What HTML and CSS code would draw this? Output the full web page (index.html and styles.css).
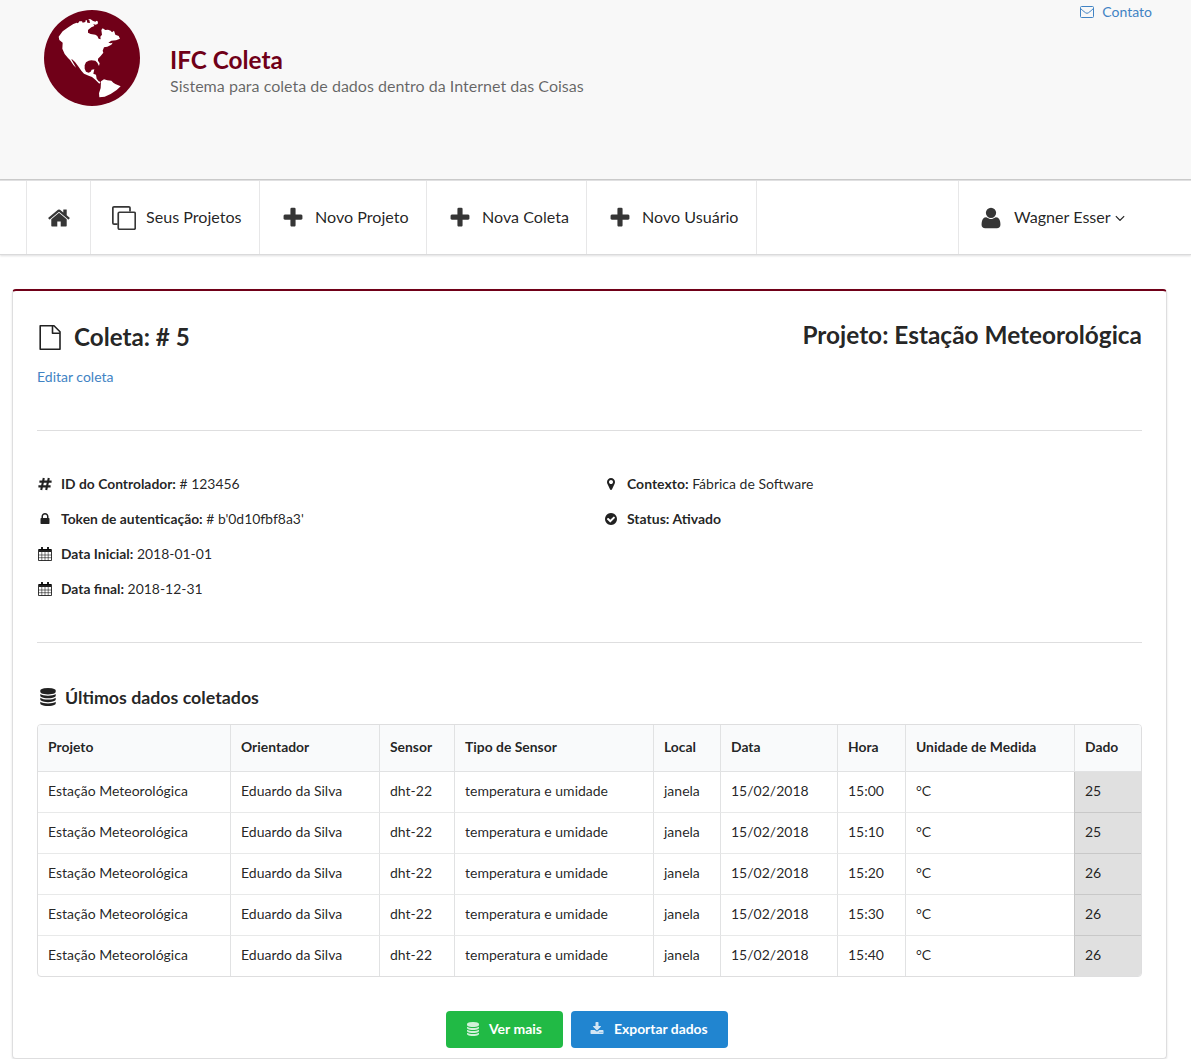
FILE: index.html
```html
<!DOCTYPE html>
<html lang="pt-BR">
<head>
<meta charset="utf-8">
<title>IFC Coleta</title>
<link rel="stylesheet" href="styles.css">
</head>
<body>
<svg class="sprite" aria-hidden="true">
  <symbol id="home" viewBox="0 0 1792 1792"><path d="M1472 992v480q0 26-19 45t-45 19h-384v-384h-256v384h-384q-26 0-45-19t-19-45v-480q0-1 .5-3t.5-3l575-474 575 474q1 2 1 6zm223-69l-62 74q-8 9-21 11h-3q-13 0-21-7l-692-577-692 577q-12 8-24 7-13-2-21-11l-62-74q-8-10-7-23.5t11-21.5l719-599q32-26 76-26t76 26l244 204v-195q0-14 9-23t23-9h192q14 0 23 9t9 23v408l219 182q10 8 11 21.5t-7 23.5z"/></symbol>
  <symbol id="clone" viewBox="0 0 24 24"><g fill="none" stroke="currentColor" stroke-width="1.7"><rect x="6.25" y="6.25" width="17" height="17" rx="1.2"/><path d="M18 5.5V2Q18 .85 16.8.85H2Q.85.85.85 2v15q0 1.2 1.2 1.2H5.5"/></g></symbol>
  <symbol id="plus" viewBox="0 0 1792 1792"><path d="M1600 736v192q0 40-28 68t-68 28h-416v416q0 40-28 68t-68 28h-192q-40 0-68-28t-28-68v-416h-416q-40 0-68-28t-28-68v-192q0-40 28-68t68-28h416v-416q0-40 28-68t68-28h192q40 0 68 28t28 68v416h416q40 0 68 28t28 68z"/></symbol>
  <symbol id="user" viewBox="0 0 1792 1792"><path d="M1600 1405q0 120-73 189.5t-194 69.5h-874q-121 0-194-69.5t-73-189.5q0-53 3.5-103.5t14-109 26.5-108.5 43-97.5 62-81 85.5-53.5 111.5-20q9 0 42 21.5t74.5 48 108 48 133.5 21.5 133.5-21.5 108-48 74.5-48 42-21.5q61 0 111.5 20t85.5 53.5 62 81 43 97.5 26.5 108.5 14 109 3.5 103.5zm-320-893q0 159-112.5 271.5t-271.5 112.5-271.5-112.5-112.5-271.5 112.5-271.5 271.5-112.5 271.5 112.5 112.5 271.5z"/></symbol>
  <symbol id="angle" viewBox="0 0 1792 1792"><path d="M1395 736q0 13-10 23l-466 466q-10 10-23 10t-23-10l-466-466q-10-10-10-23t10-23l50-50q10-10 23-10t23 10l393 393 393-393q10-10 23-10t23 10l50 50q10 10 10 23z"/></symbol>
  <symbol id="database" viewBox="0 0 1792 1792"><path d="M896 768q237 0 443-43t325-127v170q0 69-103 128t-280 93.5-385 34.5-385-34.5-280-93.5-103-128v-170q119 84 325 127t443 43zm0 768q237 0 443-43t325-127v170q0 69-103 128t-280 93.5-385 34.5-385-34.5-280-93.5-103-128v-170q119 84 325 127t443 43zm0-384q237 0 443-43t325-127v170q0 69-103 128t-280 93.5-385 34.5-385-34.5-280-93.5-103-128v-170q119 84 325 127t443 43zm0-1152q208 0 385 34.5t280 93.5 103 128v128q0 69-103 128t-280 93.5-385 34.5-385-34.5-280-93.5-103-128v-128q0-69 103-128t280-93.5 385-34.5z"/></symbol>
  <symbol id="lock" viewBox="0 0 1792 1792"><path d="M640 768h512v-192q0-106-75-181t-181-75-181 75-75 181v192zm832 96v576q0 40-28 68t-68 28h-960q-40 0-68-28t-28-68v-576q0-40 28-68t68-28h32v-192q0-184 132-316t316-132 316 132 132 316v192h32q40 0 68 28t28 68z"/></symbol>
  <symbol id="download" viewBox="0 0 1792 1792"><path d="M1344 1344q0-26-19-45t-45-19-45 19-19 45 19 45 45 19 45-19 19-45zm256 0q0-26-19-45t-45-19-45 19-19 45 19 45 45 19 45-19 19-45zm128-224v320q0 40-28 68t-68 28h-1472q-40 0-68-28t-28-68v-320q0-40 28-68t68-28h465l135 136q58 56 136 56t136-56l136-136h464q40 0 68 28t28 68zm-325-569q17 41-14 70l-448 448q-18 19-45 19t-45-19l-448-448q-31-29-14-70 17-39 59-39h256v-448q0-26 19-45t45-19h256q26 0 45 19t19 45v448h256q42 0 59 39z"/></symbol>
  <symbol id="marker" viewBox="0 0 1792 1792"><path d="M1152 640q0-106-75-181t-181-75-181 75-75 181 75 181 181 75 181-75 75-181zm256 0q0 109-33 179l-364 774q-16 33-47.5 52t-67.5 19-67.5-19-46.5-52l-365-774q-33-70-33-179 0-212 150-362t362-150 362 150 150 362z"/></symbol>
  <symbol id="check" viewBox="0 0 1792 1792"><path d="M1412 734q0-28-18-46l-91-90q-19-19-45-19t-45 19l-408 407-226-226q-19-19-45-19t-45 19l-91 90q-18 18-18 46 0 27 18 45l362 362q19 19 45 19 27 0 46-19l543-543q18-18 18-45zm252 162q0 209-103 385.5t-279.5 279.5-385.5 103-385.5-103-279.5-279.5-103-385.5 103-385.5 279.5-279.5 385.5-103 385.5 103 279.5 279.5 103 385.5z"/></symbol>
  <symbol id="hash" viewBox="0 0 14 14"><path d="M5.8 1L3.2 13M10.8 1L8.2 13M1.4 4.6H13.6M.4 9.4H12.6" fill="none" stroke="currentColor" stroke-width="2.1"/></symbol>
  <symbol id="calendar" viewBox="0 0 14 14"><path d="M1 2H13V5H1ZM3 0H5V4H3ZM9 0H11V4H9Z"/><path d="M.5 2.5H13.5V13.5H.5Z" fill="none" stroke="currentColor" stroke-width=".9"/><path d="M.5 8H13.5M.5 10.7H13.5M3.8 5V13.5M7 5V13.5M10.2 5V13.5" fill="none" stroke="currentColor" stroke-width=".6"/></symbol>
  <symbol id="envelope" viewBox="0 0 14 14"><path d="M.5 2.5Q.5 1.5 1.5 1.5H12.5Q13.5 1.5 13.5 2.5V11.5Q13.5 12.5 12.5 12.5H1.5Q.5 12.5 .5 11.5ZM.8 3.7Q2.5 5.5 5.6 7.8Q7 8.8 8.4 7.8Q11.5 5.5 13.2 3.7" fill="none" stroke="currentColor"/></symbol>
  <symbol id="file" viewBox="0 0 24 26"><path d="M2.2 .8H16L22 6.8V24.2H2.2ZM14.5 1V8.2H22" fill="none" stroke="currentColor" stroke-width="1.6" stroke-linejoin="round"/></symbol>
</svg>

<header class="masthead">
  <svg class="globe" viewBox="6 6 288 288"><circle cx="150" cy="150" r="144" fill="#700018"/><path fill="#fff" d="M50 86L62 70 80 57 94 48 104 44 108 46 112 40 120 40 122 44 130 42 131 37 134 36 136 44 144 45 142 36 138 33 146 34 152 38 160 41 164 38 168 41 167 48 160 50 154 48 157 54 148 58 138 66 138 74 146 78 160 80 166 84 170 92 176 94 175 86 180 80 178 66 182 61 190 66 198 65 206 68 210 73 216 68 220 80 230 84 234 92 222 97 208 98 199 104 206 106 212 104 208 110 196 116 186 118 182 128 184 134 176 144 168 152 168 158 173 166 171 174 166 164 160 158 148 157 140 158 132 163 128 172 128 182 132 191 140 194 146 191 149 185 157 184 154 197 162 200 164 212 170 220 176 222 172 227 160 215 150 207 140 203 126 197 118 188 108 174 99 162 90 154 88 154 96 168 102 179 94 171 84 156 78 150 68 138 61 122 62 104 52 96Z"/><path fill="#fff" d="M177 220L186 214 196 217 208 218 214 224 220 228 236 235 224 246 206 258 188 266 172 268 171 256 176 240Z"/></svg>
  <div class="brand">
    <h1>IFC Coleta</h1>
    <p>Sistema para coleta de dados dentro da Internet das Coisas</p>
  </div>
  <a class="contact"><svg class="icon"><use href="#envelope"/></svg>Contato</a>
</header>

<nav class="menu">
  <a class="item home"><svg class="big"><use href="#home"/></svg></a>
  <a class="item"><svg class="big clone"><use href="#clone"/></svg><span>Seus Projetos</span></a>
  <a class="item"><svg class="big"><use href="#plus"/></svg><span>Novo Projeto</span></a>
  <a class="item"><svg class="big"><use href="#plus"/></svg><span>Nova Coleta</span></a>
  <a class="item"><svg class="big"><use href="#plus"/></svg><span>Novo Usuário</span></a>
  <div class="item"></div>
  <a class="item account"><svg class="big"><use href="#user"/></svg><span>Wagner Esser</span><svg class="caret"><use href="#angle"/></svg></a>
</nav>

<main class="segment">
  <div class="heading">
    <h2><svg class="file"><use href="#file"/></svg>Coleta: # 5</h2>
    <h2 class="project">Projeto: Estação Meteorológica</h2>
  </div>
  <a class="edit">Editar coleta</a>
  <section class="details">
    <ul>
      <li><svg class="icon"><use href="#hash"/></svg><span><b>ID do Controlador:</b> # 123456</span></li>
      <li><svg class="icon"><use href="#lock"/></svg><span><b>Token de autenticação:</b> # b'0d10fbf8a3'</span></li>
      <li><svg class="icon"><use href="#calendar"/></svg><span><b>Data Inicial:</b> 2018-01-01</span></li>
      <li><svg class="icon"><use href="#calendar"/></svg><span><b>Data final:</b> 2018-12-31</span></li>
    </ul>
    <ul>
      <li><svg class="icon"><use href="#marker"/></svg><span><b>Contexto:</b> Fábrica de Software</span></li>
      <li><svg class="icon"><use href="#check"/></svg><span><b>Status: Ativado</b></span></li>
    </ul>
  </section>
  <h3><svg class="db"><use href="#database"/></svg>Últimos dados coletados</h3>
  <table>
    <colgroup><col class="c1"><col class="c2"><col class="c3"><col class="c4"><col class="c5"><col class="c6"><col class="c7"><col class="c8"><col class="c9"></colgroup>
    <thead><tr><th>Projeto</th><th>Orientador</th><th>Sensor</th><th>Tipo de Sensor</th><th>Local</th><th>Data</th><th>Hora</th><th>Unidade de Medida</th><th>Dado</th></tr></thead>
    <tbody>
      <tr><td>Estação Meteorológica</td><td>Eduardo da Silva</td><td>dht-22</td><td>temperatura e umidade</td><td>janela</td><td>15/02/2018</td><td>15:00</td><td>°C</td><td>25</td></tr>
      <tr><td>Estação Meteorológica</td><td>Eduardo da Silva</td><td>dht-22</td><td>temperatura e umidade</td><td>janela</td><td>15/02/2018</td><td>15:10</td><td>°C</td><td>25</td></tr>
      <tr><td>Estação Meteorológica</td><td>Eduardo da Silva</td><td>dht-22</td><td>temperatura e umidade</td><td>janela</td><td>15/02/2018</td><td>15:20</td><td>°C</td><td>26</td></tr>
      <tr><td>Estação Meteorológica</td><td>Eduardo da Silva</td><td>dht-22</td><td>temperatura e umidade</td><td>janela</td><td>15/02/2018</td><td>15:30</td><td>°C</td><td>26</td></tr>
      <tr><td>Estação Meteorológica</td><td>Eduardo da Silva</td><td>dht-22</td><td>temperatura e umidade</td><td>janela</td><td>15/02/2018</td><td>15:40</td><td>°C</td><td>26</td></tr>
    </tbody>
  </table>
  <div class="actions">
    <a class="button green"><svg class="icon"><use href="#database"/></svg>Ver mais</a>
    <a class="button blue"><svg class="icon"><use href="#download"/></svg>Exportar dados</a>
  </div>
</main>
</body>
</html>
```

FILE: styles.css
```css
* { box-sizing: border-box; }
body { margin: 0; font: 14px/20px Lato, sans-serif; color: rgba(0,0,0,.87); background: #fff; }
h1, h2, h3, p, ul { margin: 0; padding: 0; }
svg { fill: currentColor; flex: none; }
a { color: #4183c4; }
.sprite { display: none; }
.icon { width: 14px; height: 14px; }

.masthead { display: flex; height: 180px; background: #f8f8f8; border-bottom: 1px solid #ccc; padding: 0 39px 0 44px; }
.globe { width: 96px; height: 96px; margin-top: 10px; }
.brand { margin: 44px 0 0 30px; flex: 1; }
.brand h1 { font-size: 24.3px; line-height: 31px; color: #700018; }
.brand p { font-size: 16.06px; line-height: 21px; color: rgba(0,0,0,.6); }
.contact { display: flex; gap: 8px; height: 24px; align-items: center; }

.menu { display: grid; grid-template-columns: 64px 169px 167px 160px 170px 1fr 233px; height: 75px; padding-left: 26px; border-top: 1px solid #e0e0e1; border-bottom: 1px solid #dadadb; box-shadow: 0 1px 2px rgba(34,36,38,.15); }
.item { display: flex; align-items: center; font-size: 16.1px; color: rgba(0,0,0,.87); border-left: 1px solid #e7e7e8; padding-left: 20.5px; white-space: nowrap; }
.item span { margin-bottom: 2px; }
.big { width: 24px; height: 24px; margin-right: 10.5px; opacity: .9; }
.home .big { margin-left: -.5px; }
.clone { margin: 0 10px 0 .5px; }
.account { padding-left: 19.5px; }
.account .big { margin-right: 11.5px; }
.caret { width: 16px; height: 16px; margin-left: 1px; }

.segment { width: 1155px; height: 770px; margin: 34px 0 0 12px; border: 1px solid #dededf; border-top: 2px solid #700018; border-radius: 4px; box-shadow: 0 1px 2px rgba(34,36,38,.15); padding: 28px 24px 0; }
.heading { display: flex; justify-content: space-between; height: 36px; }
h2 { display: flex; font-size: 24.2px; line-height: 36px; }
.file { width: 24px; height: 26px; margin: 6px 12px 0 1px; }
.project { font-size: 24.4px; line-height: 32px; }
.edit { display: block; margin-top: 12px; line-height: 20px; }
.details { display: grid; grid-template-columns: 566px 1fr; margin-top: 43px; height: 213px; padding-top: 43px; border: solid #dededf; border-width: 1px 0; }
.details ul { list-style: none; }
.details li { display: flex; gap: 9.5px; align-items: center; height: 20px; margin-bottom: 15px; padding-left: .5px; }
.details ul:first-child b { font-size: 13.85px; }
.details ul:first-child span { font-size: 13.95px; }
h3 { display: flex; align-items: center; height: 28px; margin: 40px 0 13px; font-size: 17.8px; }
.db { width: 18px; height: 18px; margin: 0 8px 0 2px; }

table { width: 1105px; table-layout: fixed; border: 1px solid #dededf; border-radius: 4px; border-spacing: 0; overflow: hidden; }
.c1 { width: 192px; } .c2 { width: 149px; } .c3 { width: 75px; }
.c4 { width: 199px; } .c5 { width: 67px; } .c6 { width: 117px; }
.c7 { width: 68px; } .c8 { width: 169px; } .c9 { width: 67px; }
th, td { padding: 0 10px; text-align: left; white-space: nowrap; }
th { height: 47px; padding-bottom: 2px; background: #f9fafb; border-bottom: 1px solid #e1e2e3; font-size: 13.9px; }
td { height: 41px; padding-bottom: 2px; border-bottom: 1px solid #e8e9e9; }
tr:last-child td { height: 40px; border-bottom: 0; }
th + th, td + td { border-left: 1px solid #e1e2e3; }
td:last-child { background: #e0e0e0; border-color: #c8c8c8; }

.actions { display: flex; justify-content: center; gap: 8px; margin-top: 34px; padding-right: 5px; }
.button { display: flex; align-items: center; height: 37px; padding-bottom: 2px; border-radius: 4px; color: #fff; font-weight: 700; }
.button .icon { opacity: .8; }
.green { width: 117px; padding-left: 20px; gap: 9px; background: #21ba45; }
.blue { width: 157px; padding-left: 19px; gap: 10px; background: #2185d0; font-size: 13.9px; }
```
